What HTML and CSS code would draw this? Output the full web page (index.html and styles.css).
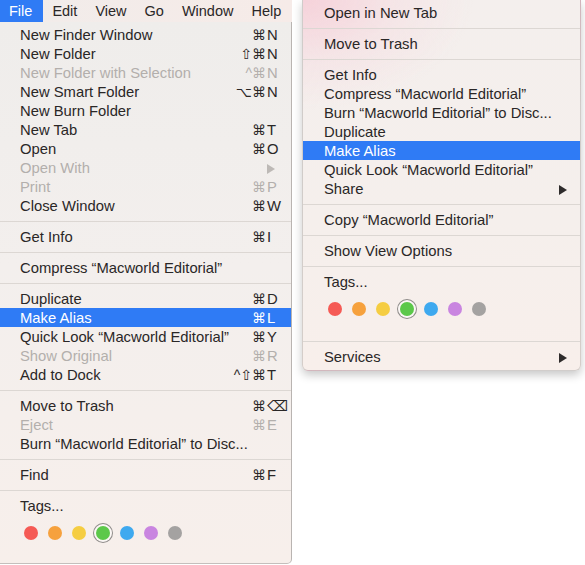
FILE: index.html
```html
<!DOCTYPE html>
<html>
<head>
<meta charset="utf-8">
<link rel="stylesheet" href="styles.css">
</head>
<body>
<div class="screen">
  <div class="finder">
    <div class="menubar">
      <span class="mb active">File</span>
      <span class="mb">Edit</span>
      <span class="mb">View</span>
      <span class="mb">Go</span>
      <span class="mb">Window</span>
      <span class="mb">Help</span>
    </div>
    <div class="menu file-menu">
      <div class="item"><span class="label">New Finder Window</span><span class="mods">⌘</span><span class="key">N</span></div>
      <div class="item"><span class="label">New Folder</span><span class="mods">⇧⌘</span><span class="key">N</span></div>
      <div class="item off"><span class="label">New Folder with Selection</span><span class="mods">^⌘</span><span class="key">N</span></div>
      <div class="item"><span class="label">New Smart Folder</span><span class="mods">⌥⌘</span><span class="key">N</span></div>
      <div class="item"><span class="label">New Burn Folder</span></div>
      <div class="item"><span class="label">New Tab</span><span class="mods">⌘</span><span class="key">T</span></div>
      <div class="item"><span class="label">Open</span><span class="mods">⌘</span><span class="key">O</span></div>
      <div class="item off"><span class="label">Open With</span><span class="key"><span class="arrow"></span></span></div>
      <div class="item off"><span class="label">Print</span><span class="mods">⌘</span><span class="key">P</span></div>
      <div class="item"><span class="label">Close Window</span><span class="mods">⌘</span><span class="key">W</span></div>
      <div class="sep"></div>
      <div class="item"><span class="label">Get Info</span><span class="mods">⌘</span><span class="key">I</span></div>
      <div class="sep"></div>
      <div class="item"><span class="label">Compress “Macworld Editorial”</span></div>
      <div class="sep"></div>
      <div class="item"><span class="label">Duplicate</span><span class="mods">⌘</span><span class="key">D</span></div>
      <div class="item sel"><span class="label">Make Alias</span><span class="mods">⌘</span><span class="key">L</span></div>
      <div class="item"><span class="label">Quick Look “Macworld Editorial”</span><span class="mods">⌘</span><span class="key">Y</span></div>
      <div class="item off"><span class="label">Show Original</span><span class="mods">⌘</span><span class="key">R</span></div>
      <div class="item"><span class="label">Add to Dock</span><span class="mods">^⇧⌘</span><span class="key">T</span></div>
      <div class="sep"></div>
      <div class="item"><span class="label">Move to Trash</span><span class="mods">⌘</span><span class="key">⌫</span></div>
      <div class="item off"><span class="label">Eject</span><span class="mods">⌘</span><span class="key">E</span></div>
      <div class="item"><span class="label">Burn “Macworld Editorial” to Disc...</span></div>
      <div class="sep"></div>
      <div class="item"><span class="label">Find</span><span class="mods">⌘</span><span class="key">F</span></div>
      <div class="sep"></div>
      <div class="item"><span class="label">Tags...</span></div>
      <div class="tags">
        <span class="slot"><span class="dot red"></span></span>
        <span class="slot"><span class="dot orange"></span></span>
        <span class="slot"><span class="dot yellow"></span></span>
        <span class="slot ring"><span class="dot green"></span></span>
        <span class="slot"><span class="dot blue"></span></span>
        <span class="slot"><span class="dot purple"></span></span>
        <span class="slot"><span class="dot gray"></span></span>
      </div>
    </div>
  </div>

  <div class="ctx menu">
    <div class="item"><span class="label">Open in New Tab</span></div>
    <div class="sep"></div>
    <div class="item"><span class="label">Move to Trash</span></div>
    <div class="sep"></div>
    <div class="item"><span class="label">Get Info</span></div>
    <div class="item"><span class="label">Compress “Macworld Editorial”</span></div>
    <div class="item"><span class="label">Burn “Macworld Editorial” to Disc...</span></div>
    <div class="item"><span class="label">Duplicate</span></div>
    <div class="item sel"><span class="label">Make Alias</span></div>
    <div class="item"><span class="label">Quick Look “Macworld Editorial”</span></div>
    <div class="item"><span class="label">Share</span><span class="arrow"></span></div>
    <div class="sep"></div>
    <div class="item"><span class="label">Copy “Macworld Editorial”</span></div>
    <div class="sep"></div>
    <div class="item"><span class="label">Show View Options</span></div>
    <div class="sep"></div>
    <div class="item"><span class="label">Tags...</span></div>
    <div class="tags">
      <span class="slot"><span class="dot red"></span></span>
      <span class="slot"><span class="dot orange"></span></span>
      <span class="slot"><span class="dot yellow"></span></span>
      <span class="slot ring"><span class="dot green"></span></span>
      <span class="slot"><span class="dot blue"></span></span>
      <span class="slot"><span class="dot purple"></span></span>
      <span class="slot"><span class="dot gray"></span></span>
    </div>
    <div class="sep"></div>
    <div class="item"><span class="label">Services</span><span class="arrow"></span></div>
  </div>
</div>
</body>
</html>
```

FILE: styles.css
```css
html, body {
  margin: 0;
  padding: 0;
  background: #ffffff;
}

.screen {
  width: 585px;
  height: 565px;
  overflow: hidden;
  display: flex;
  align-items: flex-start;
  font-family: "Liberation Sans", "DejaVu Sans", sans-serif;
  font-size: 14.8px;
  color: #2a2727;
}

.finder {
  width: 292px;
  flex: none;
}

.menubar {
  height: 22px;
  display: flex;
  align-items: stretch;
  font-size: 14.5px;
  background: linear-gradient(90deg, #f1ecea 0%, #f6ebe8 100%);
}

.mb {
  display: flex;
  align-items: center;
  padding: 0 9px;
  line-height: 22px;
}

.mb.active {
  background: #2f7bf5;
  color: #ffffff;
  padding-right: 11px;
}

.menu {
  box-sizing: border-box;
}

.file-menu {
  padding: 3px 0 4px 0;
  border-right: 1px solid #b9b4b1;
  border-bottom: 1px solid #c4bfbc;
  border-bottom-right-radius: 5px;
  background: linear-gradient(180deg, #efedeb 0%, #f3efed 45%, #f7efeb 100%);
}

.item {
  height: 19px;
  box-sizing: border-box;
  padding-top: 2px;
  display: flex;
  align-items: center;
  line-height: 17px;
  white-space: nowrap;
}

.file-menu .item {
  padding-left: 20px;
  padding-right: 8px;
}

.label {
  flex: 1;
}

.mods {
  text-align: right;
  font-size: 14px;
}

.key {
  width: 16px;
  padding-left: 1px;
  display: flex;
  align-items: center;
}

.item.off {
  color: #b3afac;
}

.item.sel {
  background: #2f7bf5;
  color: #ffffff;
}

.sep {
  height: 12px;
  display: flex;
  align-items: center;
}

.sep::after {
  content: "";
  display: block;
  width: 100%;
  height: 1px;
  background: #dcd7d3;
}

.arrow {
  width: 0;
  height: 0;
  border-top: 5px solid transparent;
  border-bottom: 5px solid transparent;
  border-left: 8px solid #2e2b2b;
}

.item.off .arrow {
  border-left-color: #bdb9b6;
}

.tags {
  height: 44px;
  display: flex;
  align-items: flex-start;
  padding-top: 7px;
  box-sizing: border-box;
}

.file-menu .tags {
  padding-left: 19px;
}

.slot {
  width: 24px;
  height: 21px;
  display: flex;
  align-items: center;
  justify-content: center;
  flex: none;
}

.slot.ring .dot {
  box-shadow: 0 0 0 2px #fbf7f5, 0 0 0 3px #8f8c8a;
}

.dot {
  width: 14px;
  height: 14px;
  border-radius: 50%;
}

.red { background: #f55a55; }
.orange { background: #f6a13d; }
.yellow { background: #f5cd42; }
.green { background: #5cc84a; }
.blue { background: #3ea9ef; }
.purple { background: #c985e0; }
.gray { background: #a4a2a1; }

.ctx {
  width: 279px;
  margin-left: 10px;
  flex: none;
  padding: 3px 0 4px 0;
  border: 1px solid rgba(0, 0, 0, 0.14);
  border-top: none;
  border-radius: 0 0 6px 6px;
  box-shadow: 0 4px 10px rgba(0, 0, 0, 0.22);
  background:
    radial-gradient(ellipse 170px 110px at 0% 0%, rgba(246, 205, 215, 0.85) 0%, rgba(246, 215, 222, 0.4) 55%, rgba(246, 230, 232, 0) 100%),
    linear-gradient(180deg, #f4efed 0%, #f5efec 60%, #f8efeb 100%);
}

.ctx .item {
  padding-left: 21px;
  padding-right: 13px;
}

.ctx .tags {
  padding-left: 20px;
}
```
